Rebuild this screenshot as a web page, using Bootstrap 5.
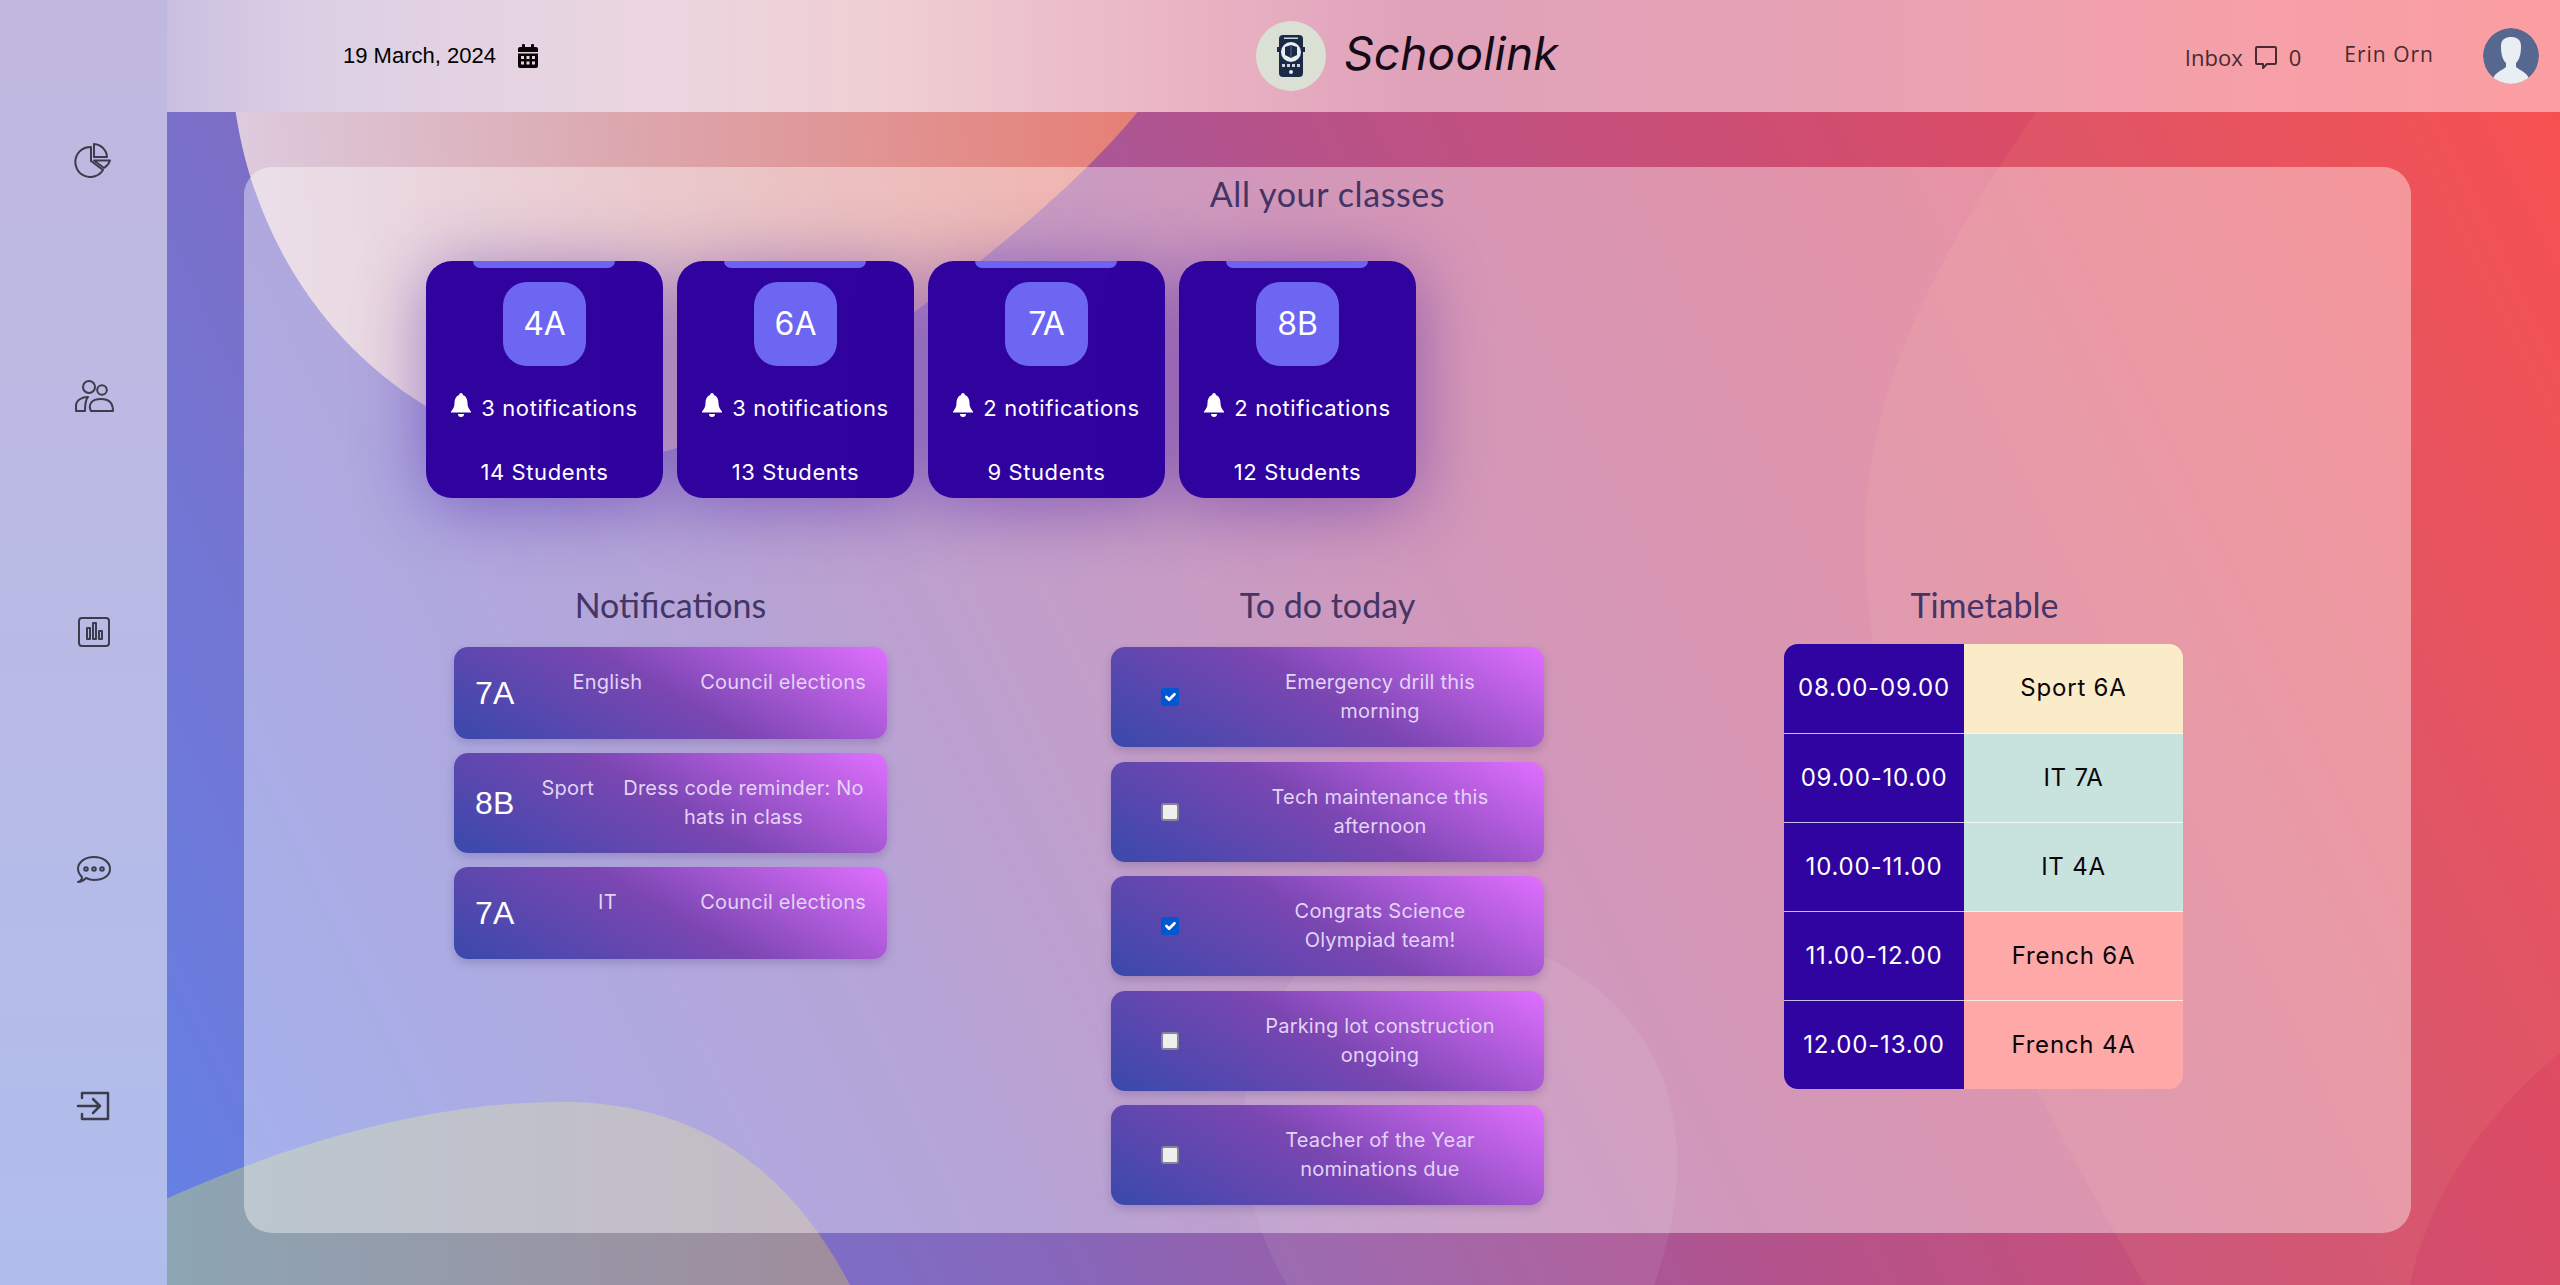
<!DOCTYPE html>
<html lang="en">
<head>
  <meta charset="UTF-8" />
  <meta name="viewport" content="width=device-width, initial-scale=1.0" />
  <title>Schoolink</title>
  <link href="https://cdn.jsdelivr.net/npm/bootstrap@5.3.2/dist/css/bootstrap.min.css" rel="stylesheet">
  <style>
    body { height: 100vh; overflow: hidden; font-family: "Inter", sans-serif; }
    .bg-art { position: absolute; inset: 0; width: 100%; height: 100%; z-index: 0; }
    .shell { position: relative; z-index: 1; height: 100vh; }
    .side { width: 167px; flex: none; padding: 142px 0 161px 21px; background: linear-gradient(180deg, #c1b8df, #b0bdec); }
    .side svg { width: 40px; height: 36px; stroke: #3c3c4c; stroke-width: 2; fill: none; stroke-linejoin: round; stroke-linecap: round; }
    .top { height: 112px; flex: none; background: linear-gradient(90deg, #cabfe0 0, #dccfe5 6%, #ebd6e0 20%, #efcfd3 30%, #e9b0c2 44%, #dfa2ba 52%, #e8a2b4 70%, #f5a0a9 85%, #fb9ea2 100%); }
    .top-date { width: 430px; padding-left: 176px; font: 22px "Liberation Sans", sans-serif; color: #000; }
    .top-date svg { width: 20px; height: 24px; margin-left: 22px; }
    .brand { margin-left: 659px; }
    .brand-mark { width: 70px; height: 70px; background: #dbe0d5; border-radius: 50%; }
    .brand-name { font: italic 400 46px "Inter", sans-serif; color: #150a18; margin: -6px 0 0 18px; letter-spacing: .2px; }
    .top-right { margin-left: auto; padding-right: 22px; color: #4a2a30; font: 22px "Open Sans", sans-serif; }
    .top-right svg.chat { width: 24px; height: 24px; margin: 2px 11px 0; }
    .top-count { margin-top: 2px; }
    .inbox-word { margin-top: 2px; }
    .user-name { margin: 0 49px 0 43px; font-size: 21px; letter-spacing: 1px; position: relative; top: -2px; }
    .avatar { width: 56px; height: 56px; border-radius: 50%; }
    .glass { height: 1066px; margin: 55px 150px 0 77px; padding: 5px 98px 0; background: rgba(255, 255, 255, .4); border-radius: 28px; }
    .sec-title { font: 34px/46px "Lato", sans-serif; color: #443566; text-align: center; margin: 0; }
    .sec-main { letter-spacing: .6px; position: relative; top: -1px; }
    .sec-head { margin-bottom: 19px; }
    .class-row { margin: 43px 0 84px 84px; gap: 14px; }
    .class-box { width: 237px; height: 237px; flex: none; background: #30039f; border-radius: 26px; color: #fff; box-shadow: 0 8px 70px rgba(48, 3, 159, .42); font-size: 22px; letter-spacing: .6px; }
    .class-box::before { content: ""; position: absolute; top: 0; left: 47px; right: 48px; height: 7px; background: #6c63f0; border-radius: 0 0 7px 7px; }
    .class-tag { width: 83px; height: 84px; margin-top: 21px; background: #6c66f2; border-radius: 24px; font-size: 32px; letter-spacing: 0; }
    .class-bell { width: 20px; height: 24px; margin: -8px 10px 0 0; }
    .class-note { margin-top: 26px; }
    .class-count { margin-top: 31px; }
    .sec-col { width: 657px; }
    .strip { width: 433px; border-radius: 14px; color: #e3d3f6; font-size: 20px; line-height: 29px; letter-spacing: .2px; box-shadow: 0 4px 10px rgba(30, 10, 80, .18); background: linear-gradient(30deg, #3949ab 0%, #7b46b2 50%, #e06fff 100%); }
    .note-strip { min-height: 92px; padding: 21px; margin-bottom: 14px; }
    .note-class { font: 32px "Liberation Sans", sans-serif; color: #fff; }
    .note-subject { flex-grow: 1; padding: 0 26px; }
    .note-text { max-width: 245px; }
    .todo-strip { height: 100px; margin-bottom: 14.5px; }
    .todo-check { width: 118px; }
    .todo-check .form-check-input { width: 18px; height: 18px; margin: 0; float: none; border-radius: 3px; background-color: #efefef; border: 2px solid #85859a; }
    .todo-check .form-check-input:checked { background-color: #0058d0; border: 0; background-size: 100%; }
    .todo-text { width: 302px; padding: 0 31px; }
    .tt-wrap { width: 399px; margin: -3px 2px 0 0; border-radius: 14px; overflow: hidden; }
    .tt-wrap td { height: 89px; font-size: 24px; letter-spacing: .8px; color: #0a0508; border-bottom: 1px solid rgba(255, 255, 255, .75); }
    .tt-wrap tr:last-child td { border-bottom: 0; }
    .tt-wrap td.tt-time { width: 180px; background: #2f04a0; color: #fff; }
    .tt-cream { background: #faecc9; }
    .tt-teal { background: #c8e2dd; }
    .tt-pink { background: #ffa8a8; }
  </style>
</head>
<body>
  <svg class="bg-art" viewBox="0 0 2560 1285" preserveAspectRatio="none">
    <defs>
      <linearGradient id="baseFill" gradientUnits="userSpaceOnUse" x1="167" y1="1285" x2="2560" y2="112">
        <stop offset="0" stop-color="#6481e6" />
        <stop offset=".3" stop-color="#8667bb" />
        <stop offset=".55" stop-color="#b4538c" />
        <stop offset=".8" stop-color="#d84c68" />
        <stop offset="1" stop-color="#f6474c" />
      </linearGradient>
      <linearGradient id="blobFill" gradientUnits="userSpaceOnUse" x1="240" y1="200" x2="1140" y2="130">
        <stop offset="0" stop-color="#ddcbdd" />
        <stop offset=".45" stop-color="#dca6ac" />
        <stop offset="1" stop-color="#e67f76" />
      </linearGradient>
      <linearGradient id="sandFill" gradientUnits="userSpaceOnUse" x1="167" y1="1200" x2="850" y2="1200">
        <stop offset="0" stop-color="#8da5b4" />
        <stop offset="1" stop-color="#a08c9c" />
      </linearGradient>
    </defs>
    <rect width="2560" height="1285" fill="url(#baseFill)" />
    <path d="M234 100 C250 230 320 340 424 405 C500 455 600 470 670 450 C770 420 860 350 917 310 C990 255 1090 175 1147 100 Z" fill="url(#blobFill)" />
    <path d="M100 1230 C260 1150 420 1100 571 1102 C700 1105 790 1170 850 1285 L100 1285 Z" fill="url(#sandFill)" />
    <path d="M2045 100 C1930 260 1865 400 1865 540 C1865 760 1990 1020 2145 1285 L2410 1285 C2430 1190 2490 1110 2560 1053 L2560 100 Z" fill="#ffc080" fill-opacity=".09" />
    <path d="M1287 1285 C1230 1190 1225 1060 1295 977 C1380 920 1510 930 1564 967 C1660 1020 1710 1130 1654 1285 Z" fill="#fff" fill-opacity=".07" />
  </svg>

  <div class="shell d-flex">
    <aside class="side d-flex flex-column justify-content-between align-items-center">
      <svg viewBox="0 0 40 36"><path d="M17 5 A15 15 0 1 0 29 28 L17 19 Z" /><path d="M20 2 A14 14 0 0 1 33 15 L20 15 Z" /><path d="M20 18.500 H36 A14 14 0 0 1 30 26 Z" /></svg>
      <svg viewBox="0 0 40 36"><circle cx="15" cy="8" r="6" /><circle cx="28" cy="11" r="4.800" /><path d="M2 32 V27 C2 21 8 18 14 18 C11 21 11 27 11 32 Z" /><path d="M17 32 C14 26 17 20 27 20 C35 20 39 24 39 32 Z" /></svg>
      <svg viewBox="0 0 40 36"><rect x="5" y="3" width="30" height="28" rx="3" /><rect x="13" y="13" width="3" height="11" /><rect x="19" y="8" width="3" height="16" /><rect x="25" y="16" width="3" height="8" /></svg>
      <svg viewBox="0 0 40 36"><path d="M4 30 C7 29 8 27 8 25 C5 22 4 20 4 17 C4 10 11 5 20 5 C29 5 36 10 36 17 C36 24 29 28 20 28 C17 28 14 27 12 26 C10 28 7 30 4 30 Z" /><circle cx="12" cy="17" r="1.800" /><circle cx="20" cy="17" r="1.800" /><circle cx="28" cy="17" r="1.800" /></svg>
      <svg viewBox="0 0 40 36"><path d="M8 10 V5 H34 V31 H8 V26" stroke-width="2.500" /><path d="M4 18 H26 M19 11 L26 18 L19 25" stroke-width="2.500" /></svg>
    </aside>

    <div class="flex-grow-1 d-flex flex-column">
      <header class="top d-flex align-items-center">
        <div class="top-date d-flex align-items-center">
          <span>19 March, 2024</span>
          <svg viewBox="0 0 20 24" fill="#0c0508"><rect x="4" y="0" width="3" height="5" rx="1" /><rect x="13" y="0" width="3" height="5" rx="1" /><path d="M2 3 H18 a2 2 0 0 1 2 2 V8 H0 V5 a2 2 0 0 1 2 -2 Z" /><path fill-rule="evenodd" d="M0 9.500 H20 V22 a2 2 0 0 1 -2 2 H2 a2 2 0 0 1 -2 -2 Z M3 12 v3 h3 v-3 Z M8.500 12 v3 h3 v-3 Z M14 12 v3 h3 v-3 Z M3 17.500 v3 h3 v-3 Z M8.500 17.500 v3 h3 v-3 Z M14 17.500 v3 h3 v-3 Z" /></svg>
        </div>
        <div class="brand d-flex align-items-center">
          <div class="brand-mark d-flex align-items-center justify-content-center">
            <svg width="28" height="42" viewBox="0 0 28 42">
              <rect x="2" y="0" width="24" height="42" rx="4" fill="#1b2b47" />
              <rect x="0" y="12" width="2" height="5" fill="#1b2b47" /><rect x="26" y="12" width="2" height="5" fill="#1b2b47" />
              <rect x="7" y="2.500" width="14" height="1.500" fill="#cbd5dc" />
              <circle cx="14" cy="17" r="10" fill="#e8eef2" />
              <path d="M8 12 L14 10 L20 12 V20 L14 23 L8 20 Z" fill="#1b2b47" />
              <path d="M14 10 V23" stroke="#5a6b85" stroke-width="1" />
              <g fill="#cbd5dc"><rect x="5" y="29" width="3" height="3" /><rect x="10" y="29" width="3" height="3" /><rect x="15" y="29" width="3" height="3" /><rect x="20" y="29" width="3" height="3" /></g>
              <circle cx="14" cy="37" r="2" fill="#e8eef2" />
            </svg>
          </div>
          <span class="brand-name">Schoolink</span>
        </div>
        <div class="top-right d-flex align-items-center">
          <span class="inbox-word">Inbox</span>
          <svg class="chat" viewBox="0 0 24 24" fill="none" stroke="#4a2a30" stroke-width="2" stroke-linejoin="round"><path d="M3 2 H21 a1 1 0 0 1 1 1 V18 a1 1 0 0 1 -1 1 H13 L9 23 V19 H3 a1 1 0 0 1 -1 -1 V3 a1 1 0 0 1 1 -1 Z" /></svg>
          <span class="top-count">0</span>
          <span class="user-name">Erin Orn</span>
          <svg class="avatar" viewBox="0 0 56 56"><circle cx="28" cy="28" r="28" fill="#56688f" /><path d="M10 51 C12 44 20 42 23 39 V35 C19 31 18 25 18 18 C18 11 23 9 28 9 C33 9 38 11 38 18 C38 25 37 31 33 35 V39 C36 42 44 44 46 51 C36 58 20 58 10 51 Z" fill="#e8eef2" /></svg>
        </div>
      </header>

      <main class="glass">
        <h2 class="sec-title sec-main">All your classes</h2>
        <div class="class-row d-flex" id="classRow"></div>
        <div class="d-flex">
          <section class="sec-col d-flex flex-column align-items-center">
            <h3 class="sec-title sec-head">Notifications</h3>
            <div id="noteList"></div>
          </section>
          <section class="sec-col d-flex flex-column align-items-center">
            <h3 class="sec-title sec-head">To do today</h3>
            <div id="todoList"></div>
          </section>
          <section class="sec-col d-flex flex-column align-items-center">
            <h3 class="sec-title sec-head">Timetable</h3>
            <div class="tt-wrap">
              <table class="w-100 text-center">
                <tr><td class="tt-time">08.00-09.00</td><td class="tt-cream">Sport 6A</td></tr>
                <tr><td class="tt-time">09.00-10.00</td><td class="tt-teal">IT 7A</td></tr>
                <tr><td class="tt-time">10.00-11.00</td><td class="tt-teal">IT 4A</td></tr>
                <tr><td class="tt-time">11.00-12.00</td><td class="tt-pink">French 6A</td></tr>
                <tr><td class="tt-time">12.00-13.00</td><td class="tt-pink">French 4A</td></tr>
              </table>
            </div>
          </section>
        </div>
      </main>
    </div>
  </div>

  <script src="https://cdn.jsdelivr.net/npm/bootstrap@5.3.2/dist/js/bootstrap.bundle.min.js"></script>
  <script>
    const bell = '<svg class="class-bell" viewBox="0 0 20 24" fill="#fff"><path d="M10 0 a1.800 1.800 0 0 1 1.800 2 C15 3 16.500 6 16.500 10 C16.500 14 18 16 20 18.500 V19.500 H0 V18.500 C2 16 3.500 14 3.500 10 C3.500 6 5 3 8.200 2 A1.800 1.800 0 0 1 10 0 Z" /><path d="M7 21 H13 A3 3 0 0 1 7 21 Z" /></svg>';
    const classes = [['4A', 3, 14], ['6A', 3, 13], ['7A', 2, 9], ['8B', 2, 12]];
    document.getElementById('classRow').innerHTML = classes.map(c => `
      <div class="class-box position-relative d-flex flex-column align-items-center">
        <div class="class-tag d-flex align-items-center justify-content-center">${c[0]}</div>
        <div class="class-note d-flex align-items-center text-nowrap">${bell}<span>${c[1]} notifications</span></div>
        <div class="class-count">${c[2]} Students</div>
      </div>`).join('');

    const notes = [['7A', 'English', 'Council elections'], ['8B', 'Sport', 'Dress code reminder: No hats in class'], ['7A', 'IT', 'Council elections']];
    document.getElementById('noteList').innerHTML = notes.map(n => `
      <div class="strip note-strip d-flex">
        <div class="note-class align-self-center">${n[0]}</div>
        <div class="note-subject text-center">${n[1]}</div>
        <div class="note-text text-center">${n[2]}</div>
      </div>`).join('');

    const todos = [['Emergency drill this morning', true], ['Tech maintenance this afternoon', false], ['Congrats Science Olympiad team!', true], ['Parking lot construction ongoing', false], ['Teacher of the Year nominations due', false]];
    document.getElementById('todoList').innerHTML = todos.map(t => `
      <div class="strip todo-strip d-flex align-items-center">
        <div class="todo-check d-flex justify-content-center"><input class="form-check-input" type="checkbox" ${t[1] ? 'checked' : ''}></div>
        <div class="todo-text text-center">${t[0]}</div>
      </div>`).join('');
  </script>
</body>
</html>
